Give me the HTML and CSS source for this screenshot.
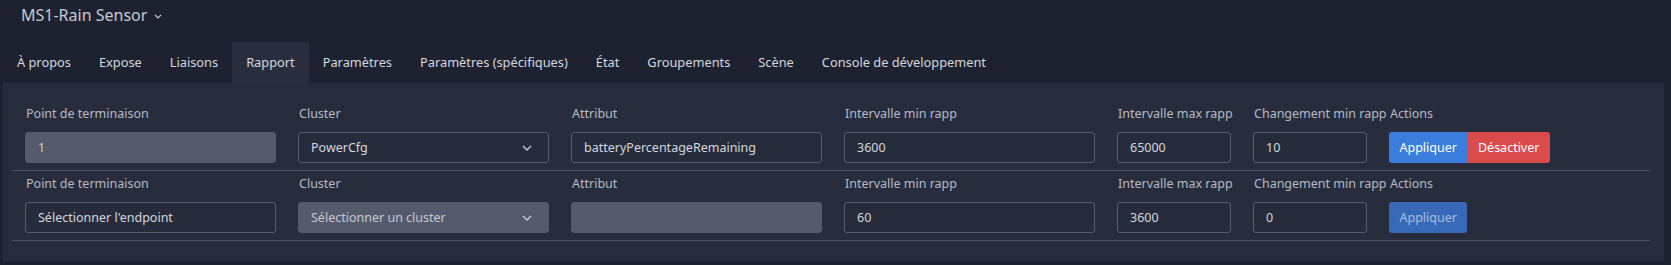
FILE: index.html
```html
<!DOCTYPE html>
<html lang="fr">
<head>
    <meta charset="UTF-8">
    <meta name="viewport" content="width=device-width, initial-scale=1.0">
    <title>MS1-Rain Sensor - Rapport</title>
    <link rel="stylesheet" href="styles.css">
</head>
<body>
    <div class="device-title">
        <span>MS1-Rain Sensor</span>
        <svg class="title-caret" width="8" height="5" viewBox="0 0 8 5"><path d="M1 1l3 3 3-3" fill="none" stroke="#c3c7d0" stroke-width="1.2"/></svg>
    </div>
    <ul class="tabs">
        <li>À propos</li>
        <li>Expose</li>
        <li>Liaisons</li>
        <li class="active">Rapport</li>
        <li>Paramètres</li>
        <li>Paramètres (spécifiques)</li>
        <li>État</li>
        <li>Groupements</li>
        <li>Scène</li>
        <li>Console de développement</li>
    </ul>
    <div class="panel">
        <div class="report-row">
            <div class="field">
                <label>Point de terminaison</label>
                <div class="input disabled">1</div>
            </div>
            <div class="field">
                <label>Cluster</label>
                <div class="input select">PowerCfg
                    <svg class="caret" width="10" height="6" viewBox="0 0 10 6"><path d="M1 1l4 4 4-4" fill="none" stroke="#c9ccd4" stroke-width="1.4"/></svg>
                </div>
            </div>
            <div class="field">
                <label>Attribut</label>
                <div class="input">batteryPercentageRemaining</div>
            </div>
            <div class="field">
                <label>Intervalle min rapp</label>
                <div class="input">3600</div>
            </div>
            <div class="field">
                <label>Intervalle max rapp</label>
                <div class="input">65000</div>
            </div>
            <div class="field">
                <label>Changement min rapp</label>
                <div class="input">10</div>
            </div>
            <div class="field">
                <label>Actions</label>
                <div class="btn-group">
                    <button class="btn btn-primary">Appliquer</button>
                    <button class="btn btn-danger">Désactiver</button>
                </div>
            </div>
        </div>
        <div class="report-row">
            <div class="field">
                <label>Point de terminaison</label>
                <div class="input">Sélectionner l'endpoint</div>
            </div>
            <div class="field">
                <label>Cluster</label>
                <div class="input select disabled">Sélectionner un cluster
                    <svg class="caret" width="10" height="6" viewBox="0 0 10 6"><path d="M1 1l4 4 4-4" fill="none" stroke="#c9ccd4" stroke-width="1.4"/></svg>
                </div>
            </div>
            <div class="field">
                <label>Attribut</label>
                <div class="input disabled"></div>
            </div>
            <div class="field">
                <label>Intervalle min rapp</label>
                <div class="input">60</div>
            </div>
            <div class="field">
                <label>Intervalle max rapp</label>
                <div class="input">3600</div>
            </div>
            <div class="field">
                <label>Changement min rapp</label>
                <div class="input">0</div>
            </div>
            <div class="field">
                <label>Actions</label>
                <div class="btn-group">
                    <button class="btn btn-primary btn-disabled">Appliquer</button>
                </div>
            </div>
        </div>
    </div>
</body>
</html>
```

FILE: styles.css
```css
body {
    font-family: "Noto Sans", "Open Sans", sans-serif;
    margin: 0;
    padding: 0 7px 0 3px;
    height: 265px;
    background-color: #1e2230;
    color: #d2d5dc;
    overflow: hidden;
}
.device-title {
    display: flex;
    align-items: center;
    gap: 7px;
    height: 30px;
    padding-left: 18px;
    font-size: 16px;
    color: #c6c9d1;
}
.title-caret {
    margin-top: 3px;
}
.tabs {
    display: flex;
    list-style: none;
    margin: 12px 0 0 0;
    padding: 0;
    height: 41px;
}
.tabs li {
    padding: 0 14px;
    line-height: 41px;
    font-size: 12.8px;
    color: #d4d7de;
    white-space: nowrap;
}
.tabs li.active {
    background-color: #292e3f;
}
.panel {
    background-color: #282d3e;
    padding: 18px 14px 20px 9px;
}
.report-row {
    display: grid;
    grid-template-columns: 251px 251px 251px 251px 114px 114px auto;
    column-gap: 22px;
    padding: 4px 0 7px 13px;
    border-bottom: 1px solid #4d5366;
}
.field label {
    display: block;
    height: 18px;
    line-height: 18px;
    margin-bottom: 9px;
    padding-left: 1px;
    font-size: 12.5px;
    color: #b6bac4;
    white-space: nowrap;
}
.input {
    display: flex;
    align-items: center;
    box-sizing: border-box;
    height: 31px;
    padding: 0 12px;
    border: 1px solid #585e70;
    border-radius: 3px;
    background-color: #272c3c;
    font-size: 12.5px;
    color: #d4d7de;
    white-space: nowrap;
}
.input.disabled {
    background-color: #555b6c;
    border-color: #555b6c;
    color: #c6c9d1;
}
.input.select {
    justify-content: space-between;
}
.caret {
    margin-right: 4px;
}
.btn-group {
    display: flex;
}
.btn {
    height: 31px;
    padding: 0 10.5px;
    border: none;
    font-family: inherit;
    font-size: 12.5px;
    color: #ffffff;
    cursor: pointer;
}
.btn-group .btn:first-child {
    border-radius: 3px 0 0 3px;
}
.btn-group .btn:last-child {
    border-radius: 0 3px 3px 0;
}
.btn-group .btn:only-child {
    border-radius: 3px;
}
.btn-primary {
    background-color: #3b7ddd;
}
.btn-danger {
    background-color: #dc4b4c;
}
.btn-disabled {
    background-color: #3869b8;
    color: #a9bde0;
}
```
